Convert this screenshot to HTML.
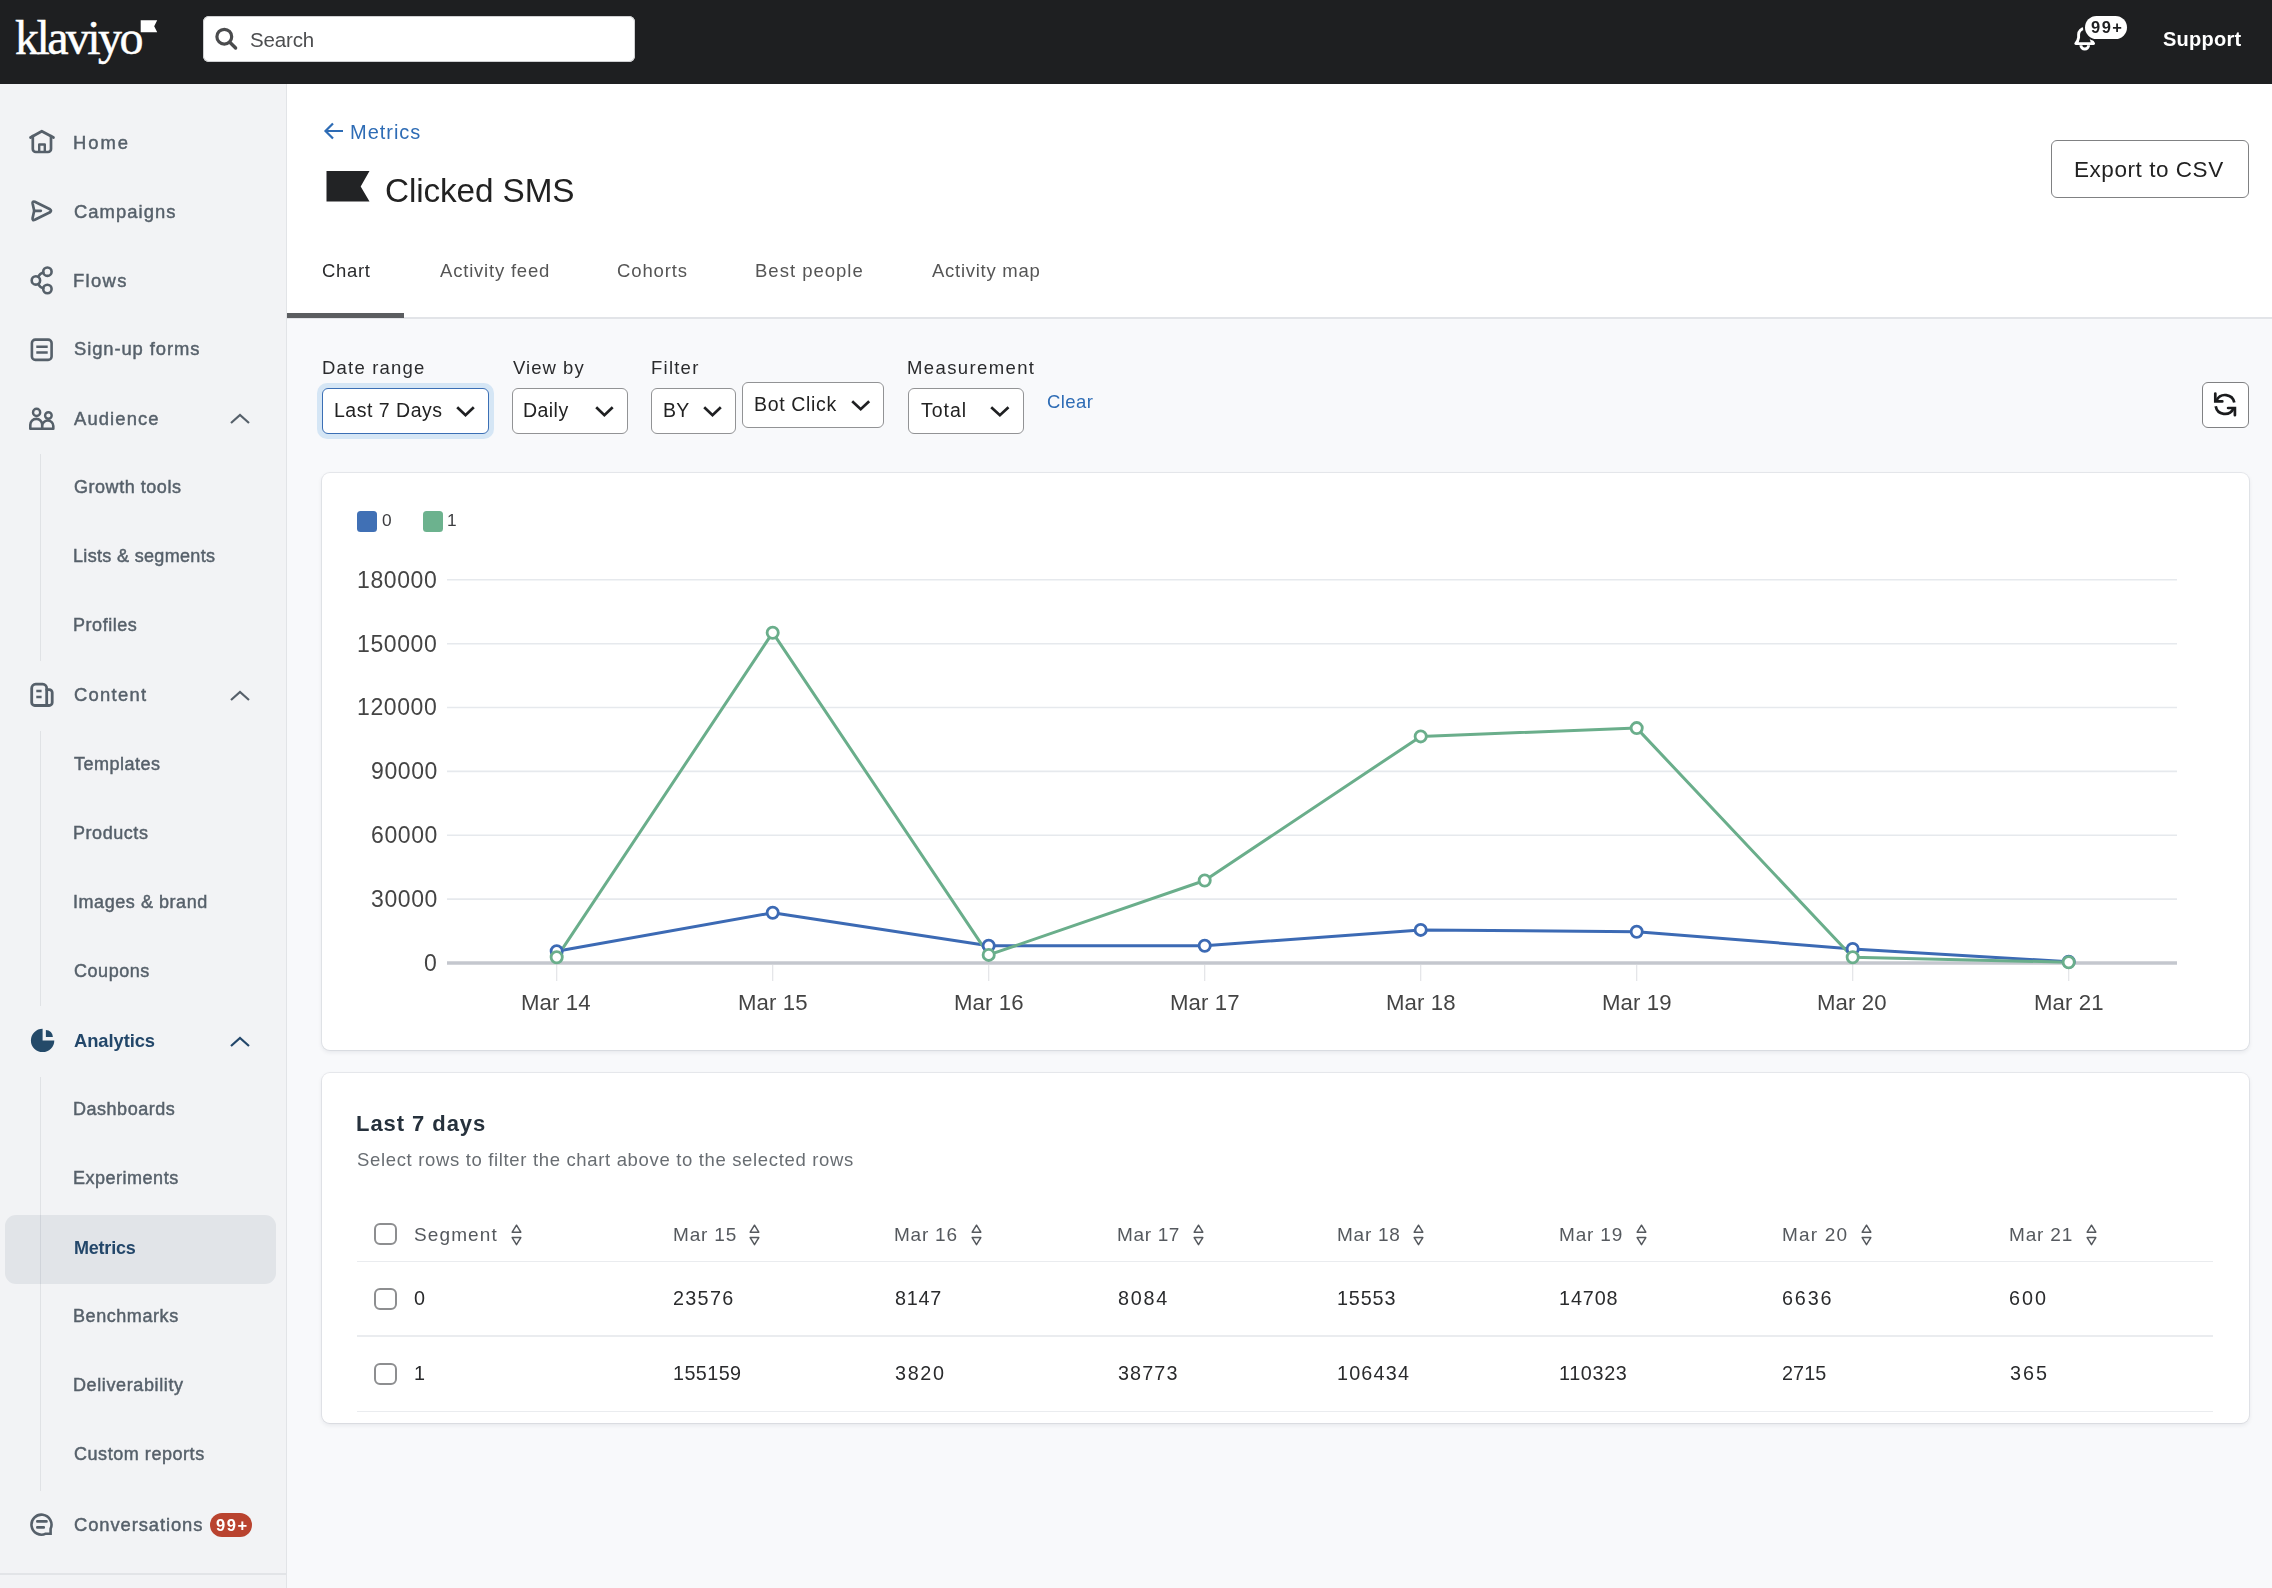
<!DOCTYPE html>
<html><head><meta charset="utf-8"><style>
html,body{margin:0;padding:0;width:2272px;height:1588px;overflow:hidden;background:#f7f8fa;font-family:"Liberation Sans", sans-serif;}
.t{position:absolute;line-height:1;white-space:nowrap;will-change:transform;}
</style></head><body>
<div style="position:absolute;left:0px;top:0px;width:2272px;height:84px;background:#1e1f21"></div>
<div style="position:absolute;left:15px;top:8.4px;font-family:'Liberation Serif',serif;font-size:48px;line-height:60px;color:#fff;letter-spacing:-2.6px;-webkit-text-stroke:0.5px #fff;white-space:nowrap">klaviyo</div>
<svg style="position:absolute;left:140px;top:20px" width="18" height="13" viewBox="0 0 18 13"><path d="M0.7 0.2H17.2L14.2 6.2L17.2 12.2H0.7Z" fill="#fff"/></svg>
<div style="position:absolute;left:203px;top:16px;width:432px;height:46px;background:#fff;border-radius:6px;box-shadow:inset 0 0 0 1px #cfd0d2"></div>
<svg style="position:absolute;left:213px;top:26px" width="26" height="26" viewBox="0 0 26 26"><circle cx="11.3" cy="10.7" r="7.4" fill="none" stroke="#4a4b4d" stroke-width="3.2"/><path d="M16.8 16.2L22.6 22" stroke="#4a4b4d" stroke-width="3.4" stroke-linecap="round"/></svg>
<div class="t " style="left:250.10px;top:29.55px;font-size:20.5px;color:#4d4e50;font-weight:400;letter-spacing:-0.160px;">Search</div>
<svg style="position:absolute;left:2060px;top:10px" width="50" height="50" viewBox="2060 10 50 50" fill="none" stroke="#fff" stroke-width="2.9" stroke-linejoin="round"><path d="M2075.8 43.6H2093.6Q2091.4 41.5 2090.8 37.5V34.5A6.1 6.1 0 0 0 2078.6 34.5V37.5Q2078 41.5 2075.8 43.6Z"/><path d="M2080.9 45.2A3.85 3.85 0 0 0 2088.6 45.2"/></svg>
<div style="position:absolute;left:2085px;top:16px;width:42px;height:23px;background:#fff;border-radius:12px;box-shadow:0 0 0 2px #1e1f21"></div>
<div class="t " style="left:2090.80px;top:19.23px;font-size:16.5px;color:#1e1f21;font-weight:700;letter-spacing:1.450px;">99+</div>
<div class="t " style="left:2163.40px;top:29.27px;font-size:20px;color:#fff;font-weight:700;letter-spacing:0.250px;">Support</div>
<div style="position:absolute;left:0px;top:84px;width:286px;height:1504px;background:#f2f3f5"></div>
<div style="position:absolute;left:286px;top:84px;width:1px;height:1504px;background:#e2e4e7"></div>
<div style="position:absolute;left:0px;top:1573px;width:286px;height:1.5px;background:#e2e4e7"></div>
<div style="position:absolute;left:5px;top:1215px;width:271px;height:69px;background:#e1e4e8;border-radius:11px"></div>
<div style="position:absolute;left:40.3px;top:454px;width:1px;height:207px;background:rgba(30,45,65,0.085)"></div>
<div style="position:absolute;left:40.3px;top:731px;width:1px;height:275px;background:rgba(30,45,65,0.085)"></div>
<div style="position:absolute;left:40.3px;top:1077px;width:1px;height:414px;background:rgba(30,45,65,0.085)"></div>
<div class="t " style="left:72.90px;top:133.72px;font-size:18.4px;color:#56606a;font-weight:400;letter-spacing:1.933px;-webkit-text-stroke:0.45px currentColor;">Home</div>
<div class="t " style="left:73.50px;top:203.42px;font-size:18.4px;color:#56606a;font-weight:400;letter-spacing:1.050px;-webkit-text-stroke:0.45px currentColor;">Campaigns</div>
<div class="t " style="left:72.90px;top:271.72px;font-size:18.4px;color:#56606a;font-weight:400;letter-spacing:1.325px;-webkit-text-stroke:0.45px currentColor;">Flows</div>
<div class="t " style="left:73.60px;top:340.42px;font-size:18.4px;color:#56606a;font-weight:400;letter-spacing:0.908px;-webkit-text-stroke:0.45px currentColor;">Sign-up forms</div>
<div class="t " style="left:74.40px;top:410.12px;font-size:18.4px;color:#56606a;font-weight:400;letter-spacing:1.129px;-webkit-text-stroke:0.45px currentColor;">Audience</div>
<div class="t " style="left:73.50px;top:686.32px;font-size:18.4px;color:#56606a;font-weight:400;letter-spacing:1.267px;-webkit-text-stroke:0.45px currentColor;">Content</div>
<div class="t " style="left:73.50px;top:1516.12px;font-size:18.4px;color:#56606a;font-weight:400;letter-spacing:0.908px;-webkit-text-stroke:0.45px currentColor;">Conversations</div>
<div class="t " style="left:73.80px;top:1032.42px;font-size:18.4px;color:#23476a;font-weight:700;letter-spacing:-0.087px;">Analytics</div>
<div class="t " style="left:73.90px;top:478.06px;font-size:18px;color:#56606a;font-weight:400;letter-spacing:0.536px;-webkit-text-stroke:0.45px currentColor;">Growth tools</div>
<div class="t " style="left:73.30px;top:547.26px;font-size:18px;color:#56606a;font-weight:400;letter-spacing:0.333px;-webkit-text-stroke:0.45px currentColor;">Lists &amp; segments</div>
<div class="t " style="left:73.30px;top:616.26px;font-size:18px;color:#56606a;font-weight:400;letter-spacing:0.543px;-webkit-text-stroke:0.45px currentColor;">Profiles</div>
<div class="t " style="left:74.40px;top:754.56px;font-size:18px;color:#56606a;font-weight:400;letter-spacing:0.500px;-webkit-text-stroke:0.45px currentColor;">Templates</div>
<div class="t " style="left:73.30px;top:823.56px;font-size:18px;color:#56606a;font-weight:400;letter-spacing:0.550px;-webkit-text-stroke:0.45px currentColor;">Products</div>
<div class="t " style="left:73.20px;top:893.26px;font-size:18px;color:#56606a;font-weight:400;letter-spacing:0.550px;-webkit-text-stroke:0.45px currentColor;">Images &amp; brand</div>
<div class="t " style="left:73.90px;top:962.26px;font-size:18px;color:#56606a;font-weight:400;letter-spacing:0.550px;-webkit-text-stroke:0.45px currentColor;">Coupons</div>
<div class="t " style="left:73.30px;top:1100.06px;font-size:18px;color:#56606a;font-weight:400;letter-spacing:0.522px;-webkit-text-stroke:0.45px currentColor;">Dashboards</div>
<div class="t " style="left:73.30px;top:1169.26px;font-size:18px;color:#56606a;font-weight:400;letter-spacing:0.510px;-webkit-text-stroke:0.45px currentColor;">Experiments</div>
<div class="t " style="left:73.30px;top:1307.26px;font-size:18px;color:#56606a;font-weight:400;letter-spacing:0.567px;-webkit-text-stroke:0.45px currentColor;">Benchmarks</div>
<div class="t " style="left:73.30px;top:1376.36px;font-size:18px;color:#56606a;font-weight:400;letter-spacing:0.615px;-webkit-text-stroke:0.45px currentColor;">Deliverability</div>
<div class="t " style="left:73.90px;top:1445.26px;font-size:18px;color:#56606a;font-weight:400;letter-spacing:0.546px;-webkit-text-stroke:0.45px currentColor;">Custom reports</div>
<div class="t " style="left:74.00px;top:1238.56px;font-size:18px;color:#23476a;font-weight:700;letter-spacing:-0.217px;">Metrics</div>
<svg style="position:absolute;left:228px;top:412px" width="24" height="14" viewBox="0 0 24 14"><path d="M3 11L12 3L21 11" fill="none" stroke="#56606a" stroke-width="2.2"/></svg>
<svg style="position:absolute;left:228px;top:689px" width="24" height="14" viewBox="0 0 24 14"><path d="M3 11L12 3L21 11" fill="none" stroke="#56606a" stroke-width="2.2"/></svg>
<svg style="position:absolute;left:228px;top:1035px" width="24" height="14" viewBox="0 0 24 14"><path d="M3 11L12 3L21 11" fill="none" stroke="#23476a" stroke-width="2.2"/></svg>
<div style="position:absolute;left:210px;top:1513px;width:42px;height:24px;background:#b9432f;border-radius:12px"></div>
<div class="t " style="left:215.50px;top:1517.23px;font-size:16.5px;color:#fff;font-weight:700;letter-spacing:1.550px;">99+</div>
<div style="position:absolute;left:287px;top:84px;width:1985px;height:234px;background:#fff"></div>
<div style="position:absolute;left:287px;top:318px;width:1985px;height:1270px;background:#f8f9fb"></div>
<div style="position:absolute;left:287px;top:317px;width:1985px;height:1.5px;background:#e2e4e8"></div>
<div style="position:absolute;left:287px;top:313px;width:117px;height:5px;background:#5b5d60"></div>
<svg style="position:absolute;left:321px;top:118.5px" width="26" height="24" viewBox="0 0 26 24"><path d="M22 12H5M12 4.5L4.5 12L12 19.5" fill="none" stroke="#2e6cb5" stroke-width="2.2"/></svg>
<div class="t " style="left:350.00px;top:121.97px;font-size:20px;color:#2e6cb5;font-weight:400;letter-spacing:0.983px;">Metrics</div>
<svg style="position:absolute;left:326px;top:171px" width="44" height="31" viewBox="0 0 44 31"><path d="M0.5 0H43.5L34.7 15.4L43.5 30.5H0.5Z" fill="#222325"/></svg>
<div class="t " style="left:385.30px;top:174.11px;font-size:33.3px;color:#222;font-weight:400;letter-spacing:-0.110px;">Clicked SMS</div>
<div class="t " style="left:322.00px;top:261.84px;font-size:18.5px;color:#2a2b2d;font-weight:400;letter-spacing:0.650px;">Chart</div>
<div class="t " style="left:439.60px;top:261.84px;font-size:18.5px;color:#555;font-weight:400;letter-spacing:0.800px;">Activity feed</div>
<div class="t " style="left:617.10px;top:261.84px;font-size:18.5px;color:#555;font-weight:400;letter-spacing:0.867px;">Cohorts</div>
<div class="t " style="left:755.10px;top:261.84px;font-size:18.5px;color:#555;font-weight:400;letter-spacing:1.000px;">Best people</div>
<div class="t " style="left:932.00px;top:261.84px;font-size:18.5px;color:#555;font-weight:400;letter-spacing:0.736px;">Activity map</div>
<div style="position:absolute;left:2051px;top:140px;width:198px;height:58px;background:#fff;border:1.5px solid #808183;border-radius:6px;box-sizing:border-box"></div>
<div class="t " style="left:2074.20px;top:159.15px;font-size:22.5px;color:#222;font-weight:400;letter-spacing:0.550px;">Export to CSV</div>
<div class="t " style="left:321.90px;top:359.04px;font-size:18.5px;color:#2a2b2d;font-weight:400;letter-spacing:1.200px;">Date range</div>
<div class="t " style="left:513.20px;top:359.04px;font-size:18.5px;color:#2a2b2d;font-weight:400;letter-spacing:1.033px;">View by</div>
<div class="t " style="left:650.50px;top:359.04px;font-size:18.5px;color:#2a2b2d;font-weight:400;letter-spacing:1.240px;">Filter</div>
<div class="t " style="left:906.80px;top:359.04px;font-size:18.5px;color:#2a2b2d;font-weight:400;letter-spacing:1.390px;">Measurement</div>
<div style="position:absolute;left:317px;top:383px;width:177px;height:56px;background:#d5e6f5;border-radius:10px"></div>
<div style="position:absolute;left:322px;top:388px;width:167px;height:46px;background:#fff;border:1.5px solid #3b6fb5;border-radius:6px;box-sizing:border-box"></div>
<div class="t " style="left:333.80px;top:400.99px;font-size:19.5px;color:#222;font-weight:400;letter-spacing:0.510px;">Last 7 Days</div>
<svg style="position:absolute;left:454px;top:404.0px" width="23" height="16" viewBox="0 0 23 16"><path d="M3.2 3.2L11.5 11.2L19.8 3.2" fill="none" stroke="#1f2022" stroke-width="2.7"/></svg>
<div style="position:absolute;left:512px;top:388px;width:116px;height:46px;background:#fff;border:1.5px solid #929395;border-radius:6px;box-sizing:border-box"></div>
<div class="t " style="left:523.10px;top:400.99px;font-size:19.5px;color:#222;font-weight:400;letter-spacing:0.450px;">Daily</div>
<svg style="position:absolute;left:592.7px;top:404.0px" width="22.899999999999977" height="16" viewBox="0 0 22.899999999999977 16"><path d="M3.2 3.2L11.4 11.2L19.7 3.2" fill="none" stroke="#1f2022" stroke-width="2.7"/></svg>
<div style="position:absolute;left:651px;top:388px;width:85px;height:46px;background:#fff;border:1.5px solid #929395;border-radius:6px;box-sizing:border-box"></div>
<div class="t " style="left:662.80px;top:400.99px;font-size:19.5px;color:#222;font-weight:400;letter-spacing:0.200px;">BY</div>
<svg style="position:absolute;left:700.7px;top:404.0px" width="23.0" height="16" viewBox="0 0 23.0 16"><path d="M3.2 3.2L11.5 11.2L19.8 3.2" fill="none" stroke="#1f2022" stroke-width="2.7"/></svg>
<div style="position:absolute;left:742px;top:382px;width:142px;height:46px;background:#fff;border:1.5px solid #929395;border-radius:6px;box-sizing:border-box"></div>
<div class="t " style="left:753.80px;top:395.49px;font-size:19.5px;color:#222;font-weight:400;letter-spacing:0.650px;">Bot Click</div>
<svg style="position:absolute;left:848.6px;top:398.0px" width="23.399999999999977" height="16" viewBox="0 0 23.399999999999977 16"><path d="M3.2 3.2L11.7 11.2L20.2 3.2" fill="none" stroke="#1f2022" stroke-width="2.7"/></svg>
<div style="position:absolute;left:907.5px;top:388px;width:116px;height:46px;background:#fff;border:1.5px solid #929395;border-radius:6px;box-sizing:border-box"></div>
<div class="t " style="left:920.90px;top:400.99px;font-size:19.5px;color:#222;font-weight:400;letter-spacing:0.975px;">Total</div>
<svg style="position:absolute;left:988px;top:404.0px" width="23.700000000000045" height="16" viewBox="0 0 23.700000000000045 16"><path d="M3.2 3.2L11.9 11.2L20.5 3.2" fill="none" stroke="#1f2022" stroke-width="2.7"/></svg>
<div class="t " style="left:1047.10px;top:393.34px;font-size:18.5px;color:#2e6cb5;font-weight:400;letter-spacing:0.400px;">Clear</div>
<div style="position:absolute;left:2202px;top:382px;width:47px;height:46px;background:#fff;border:1.5px solid #808183;border-radius:6px;box-sizing:border-box"></div>
<svg style="position:absolute;left:2196px;top:376px" width="60" height="58" viewBox="2196 376 60 58" fill="none" stroke="#1a1b1d" stroke-width="2.7"><path d="M2216.6 400.4A9.4 9.4 0 0 1 2234.3 402.6"/><path d="M2215.3 393.6V401.4H2222.3" stroke-linecap="round"/><path d="M2215.7 406.2A9.4 9.4 0 0 0 2233.4 408.6"/><path d="M2228.1 408H2234.9V415.2" stroke-linecap="round"/></svg>
<div style="position:absolute;left:322px;top:473px;width:1927px;height:577px;background:#fff;border-radius:8px;box-shadow:0 0 0 1px rgba(20,30,50,0.07), 0 2px 5px rgba(20,30,50,0.09)"></div>
<div style="position:absolute;left:356.5px;top:511.3px;width:20px;height:20.5px;background:#4070b5;border-radius:3.5px"></div>
<div class="t " style="left:382.40px;top:512.16px;font-size:17.3px;color:#3c3d40;font-weight:400;letter-spacing:0.000px;">0</div>
<div style="position:absolute;left:423.3px;top:511.3px;width:20px;height:20.5px;background:#6cb28e;border-radius:3.5px"></div>
<div class="t " style="left:447.20px;top:512.16px;font-size:17.3px;color:#3c3d40;font-weight:400;letter-spacing:0.000px;">1</div>
<svg style="position:absolute;left:0;top:0" width="2272" height="1588" viewBox="0 0 2272 1588"><line x1="447" y1="579.8" x2="2177" y2="579.8" stroke="#e6e9ed" stroke-width="1.6"/><line x1="447" y1="643.7" x2="2177" y2="643.7" stroke="#e6e9ed" stroke-width="1.6"/><line x1="447" y1="707.5" x2="2177" y2="707.5" stroke="#e6e9ed" stroke-width="1.6"/><line x1="447" y1="771.4" x2="2177" y2="771.4" stroke="#e6e9ed" stroke-width="1.6"/><line x1="447" y1="835.3" x2="2177" y2="835.3" stroke="#e6e9ed" stroke-width="1.6"/><line x1="447" y1="899.1" x2="2177" y2="899.1" stroke="#e6e9ed" stroke-width="1.6"/><line x1="556.7" y1="965" x2="556.7" y2="981" stroke="#e3e4e7" stroke-width="1.2"/><line x1="772.7" y1="965" x2="772.7" y2="981" stroke="#e3e4e7" stroke-width="1.2"/><line x1="988.7" y1="965" x2="988.7" y2="981" stroke="#e3e4e7" stroke-width="1.2"/><line x1="1204.7" y1="965" x2="1204.7" y2="981" stroke="#e3e4e7" stroke-width="1.2"/><line x1="1420.7" y1="965" x2="1420.7" y2="981" stroke="#e3e4e7" stroke-width="1.2"/><line x1="1636.7" y1="965" x2="1636.7" y2="981" stroke="#e3e4e7" stroke-width="1.2"/><line x1="1852.7" y1="965" x2="1852.7" y2="981" stroke="#e3e4e7" stroke-width="1.2"/><line x1="2068.7" y1="965" x2="2068.7" y2="981" stroke="#e3e4e7" stroke-width="1.2"/><line x1="447" y1="963.0" x2="2177" y2="963.0" stroke="#c4c7ce" stroke-width="3.4"/><polyline points="556.7,951.3 772.7,912.8 988.7,945.7 1204.7,945.8 1420.7,929.9 1636.7,931.7 1852.7,948.9 2068.7,961.7" fill="none" stroke="#3c6ab4" stroke-width="3" stroke-linejoin="round"/><polyline points="556.7,957.3 772.7,632.7 988.7,954.9 1204.7,880.5 1420.7,736.4 1636.7,728.1 1852.7,957.2 2068.7,962.2" fill="none" stroke="#6aae8b" stroke-width="3" stroke-linejoin="round"/><circle cx="556.7" cy="951.3" r="5.6" fill="#fff" stroke="#3c6ab4" stroke-width="2.8"/><circle cx="772.7" cy="912.8" r="5.6" fill="#fff" stroke="#3c6ab4" stroke-width="2.8"/><circle cx="988.7" cy="945.7" r="5.6" fill="#fff" stroke="#3c6ab4" stroke-width="2.8"/><circle cx="1204.7" cy="945.8" r="5.6" fill="#fff" stroke="#3c6ab4" stroke-width="2.8"/><circle cx="1420.7" cy="929.9" r="5.6" fill="#fff" stroke="#3c6ab4" stroke-width="2.8"/><circle cx="1636.7" cy="931.7" r="5.6" fill="#fff" stroke="#3c6ab4" stroke-width="2.8"/><circle cx="1852.7" cy="948.9" r="5.6" fill="#fff" stroke="#3c6ab4" stroke-width="2.8"/><circle cx="2068.7" cy="961.7" r="5.6" fill="#fff" stroke="#3c6ab4" stroke-width="2.8"/><circle cx="556.7" cy="957.3" r="5.6" fill="#fff" stroke="#6aae8b" stroke-width="2.8"/><circle cx="772.7" cy="632.7" r="5.6" fill="#fff" stroke="#6aae8b" stroke-width="2.8"/><circle cx="988.7" cy="954.9" r="5.6" fill="#fff" stroke="#6aae8b" stroke-width="2.8"/><circle cx="1204.7" cy="880.5" r="5.6" fill="#fff" stroke="#6aae8b" stroke-width="2.8"/><circle cx="1420.7" cy="736.4" r="5.6" fill="#fff" stroke="#6aae8b" stroke-width="2.8"/><circle cx="1636.7" cy="728.1" r="5.6" fill="#fff" stroke="#6aae8b" stroke-width="2.8"/><circle cx="1852.7" cy="957.2" r="5.6" fill="#fff" stroke="#6aae8b" stroke-width="2.8"/><circle cx="2068.7" cy="962.2" r="5.6" fill="#fff" stroke="#6aae8b" stroke-width="2.8"/></svg>
<div class="t " style="left:357.10px;top:568.63px;font-size:23px;color:#444;font-weight:400;letter-spacing:0.600px;">180000</div>
<div class="t " style="left:357.10px;top:632.50px;font-size:23px;color:#444;font-weight:400;letter-spacing:0.600px;">150000</div>
<div class="t " style="left:357.10px;top:696.36px;font-size:23px;color:#444;font-weight:400;letter-spacing:0.600px;">120000</div>
<div class="t " style="left:370.50px;top:760.23px;font-size:23px;color:#444;font-weight:400;letter-spacing:0.600px;">90000</div>
<div class="t " style="left:370.50px;top:824.10px;font-size:23px;color:#444;font-weight:400;letter-spacing:0.600px;">60000</div>
<div class="t " style="left:370.50px;top:887.96px;font-size:23px;color:#444;font-weight:400;letter-spacing:0.600px;">30000</div>
<div class="t " style="left:424.10px;top:951.83px;font-size:23px;color:#444;font-weight:400;letter-spacing:0.600px;">0</div>
<div class="t " style="left:521.35px;top:992.11px;font-size:22.2px;color:#444;font-weight:400;letter-spacing:0.100px;">Mar 14</div>
<div class="t " style="left:737.50px;top:992.11px;font-size:22.2px;color:#444;font-weight:400;letter-spacing:0.100px;">Mar 15</div>
<div class="t " style="left:953.50px;top:992.11px;font-size:22.2px;color:#444;font-weight:400;letter-spacing:0.100px;">Mar 16</div>
<div class="t " style="left:1169.55px;top:992.11px;font-size:22.2px;color:#444;font-weight:400;letter-spacing:0.100px;">Mar 17</div>
<div class="t " style="left:1385.50px;top:992.11px;font-size:22.2px;color:#444;font-weight:400;letter-spacing:0.100px;">Mar 18</div>
<div class="t " style="left:1601.55px;top:992.11px;font-size:22.2px;color:#444;font-weight:400;letter-spacing:0.100px;">Mar 19</div>
<div class="t " style="left:1817.45px;top:992.11px;font-size:22.2px;color:#444;font-weight:400;letter-spacing:0.100px;">Mar 20</div>
<div class="t " style="left:2033.55px;top:992.11px;font-size:22.2px;color:#444;font-weight:400;letter-spacing:0.100px;">Mar 21</div>
<div style="position:absolute;left:322px;top:1073px;width:1927px;height:350px;background:#fff;border-radius:8px;box-shadow:0 0 0 1px rgba(20,30,50,0.07), 0 2px 5px rgba(20,30,50,0.09)"></div>
<div class="t " style="left:356.20px;top:1112.98px;font-size:22px;color:#26313c;font-weight:700;letter-spacing:0.940px;">Last 7 days</div>
<div class="t " style="left:356.80px;top:1151.14px;font-size:18.5px;color:#686d72;font-weight:400;letter-spacing:0.660px;">Select rows to filter the chart above to the selected rows</div>
<div style="position:absolute;left:357px;top:1260.6px;width:1856px;height:1.4px;background:#eaecef"></div>
<div style="position:absolute;left:357px;top:1335.4px;width:1856px;height:1.4px;background:#eaecef"></div>
<div style="position:absolute;left:357px;top:1411px;width:1856px;height:1.4px;background:#eaecef"></div>
<div style="position:absolute;left:373.9px;top:1222.6px;width:22.7px;height:22.5px;border:2.5px solid #8d8e90;border-radius:6px;box-sizing:border-box;background:#fff"></div>
<div style="position:absolute;left:373.9px;top:1287.8px;width:22.7px;height:22.5px;border:2.5px solid #8d8e90;border-radius:6px;box-sizing:border-box;background:#fff"></div>
<div style="position:absolute;left:373.9px;top:1362.6px;width:22.7px;height:22.5px;border:2.5px solid #8d8e90;border-radius:6px;box-sizing:border-box;background:#fff"></div>
<div class="t " style="left:414.10px;top:1225.32px;font-size:19px;color:#55595e;font-weight:400;letter-spacing:1.117px;">Segment</div>
<svg style="position:absolute;left:509.1px;top:1223.8px" width="15" height="22" viewBox="0 0 15 22" fill="none" stroke="#55595e" stroke-width="1.5" stroke-linejoin="round"><path d="M7.5 1.2L11.8 8.2H3.2Z"/><path d="M7.5 20.6L11.8 13.6H3.2Z"/></svg>
<div class="t " style="left:672.50px;top:1225.32px;font-size:19px;color:#55595e;font-weight:400;letter-spacing:0.820px;">Mar 15</div>
<svg style="position:absolute;left:747.3px;top:1223.8px" width="15" height="22" viewBox="0 0 15 22" fill="none" stroke="#55595e" stroke-width="1.5" stroke-linejoin="round"><path d="M7.5 1.2L11.8 8.2H3.2Z"/><path d="M7.5 20.6L11.8 13.6H3.2Z"/></svg>
<div class="t " style="left:894.30px;top:1225.32px;font-size:19px;color:#55595e;font-weight:400;letter-spacing:0.780px;">Mar 16</div>
<svg style="position:absolute;left:968.8999999999999px;top:1223.8px" width="15" height="22" viewBox="0 0 15 22" fill="none" stroke="#55595e" stroke-width="1.5" stroke-linejoin="round"><path d="M7.5 1.2L11.8 8.2H3.2Z"/><path d="M7.5 20.6L11.8 13.6H3.2Z"/></svg>
<div class="t " style="left:1116.90px;top:1225.32px;font-size:19px;color:#55595e;font-weight:400;letter-spacing:0.660px;">Mar 17</div>
<svg style="position:absolute;left:1190.7px;top:1223.8px" width="15" height="22" viewBox="0 0 15 22" fill="none" stroke="#55595e" stroke-width="1.5" stroke-linejoin="round"><path d="M7.5 1.2L11.8 8.2H3.2Z"/><path d="M7.5 20.6L11.8 13.6H3.2Z"/></svg>
<div class="t " style="left:1336.50px;top:1225.32px;font-size:19px;color:#55595e;font-weight:400;letter-spacing:0.760px;">Mar 18</div>
<svg style="position:absolute;left:1411.0px;top:1223.8px" width="15" height="22" viewBox="0 0 15 22" fill="none" stroke="#55595e" stroke-width="1.5" stroke-linejoin="round"><path d="M7.5 1.2L11.8 8.2H3.2Z"/><path d="M7.5 20.6L11.8 13.6H3.2Z"/></svg>
<div class="t " style="left:1559.10px;top:1225.32px;font-size:19px;color:#55595e;font-weight:400;letter-spacing:0.840px;">Mar 19</div>
<svg style="position:absolute;left:1633.8999999999999px;top:1223.8px" width="15" height="22" viewBox="0 0 15 22" fill="none" stroke="#55595e" stroke-width="1.5" stroke-linejoin="round"><path d="M7.5 1.2L11.8 8.2H3.2Z"/><path d="M7.5 20.6L11.8 13.6H3.2Z"/></svg>
<div class="t " style="left:1781.90px;top:1225.32px;font-size:19px;color:#55595e;font-weight:400;letter-spacing:1.200px;">Mar 20</div>
<svg style="position:absolute;left:1858.7px;top:1223.8px" width="15" height="22" viewBox="0 0 15 22" fill="none" stroke="#55595e" stroke-width="1.5" stroke-linejoin="round"><path d="M7.5 1.2L11.8 8.2H3.2Z"/><path d="M7.5 20.6L11.8 13.6H3.2Z"/></svg>
<div class="t " style="left:2008.90px;top:1225.32px;font-size:19px;color:#55595e;font-weight:400;letter-spacing:0.840px;">Mar 21</div>
<svg style="position:absolute;left:2083.7000000000003px;top:1223.8px" width="15" height="22" viewBox="0 0 15 22" fill="none" stroke="#55595e" stroke-width="1.5" stroke-linejoin="round"><path d="M7.5 1.2L11.8 8.2H3.2Z"/><path d="M7.5 20.6L11.8 13.6H3.2Z"/></svg>
<div class="t " style="left:414.30px;top:1289.24px;font-size:19.8px;color:#2a2b2d;font-weight:400;letter-spacing:0.700px;">0</div>
<div class="t " style="left:673.00px;top:1289.24px;font-size:19.8px;color:#2a2b2d;font-weight:400;letter-spacing:1.300px;">23576</div>
<div class="t " style="left:895.00px;top:1289.24px;font-size:19.8px;color:#2a2b2d;font-weight:400;letter-spacing:0.733px;">8147</div>
<div class="t " style="left:1117.60px;top:1289.24px;font-size:19.8px;color:#2a2b2d;font-weight:400;letter-spacing:1.767px;">8084</div>
<div class="t " style="left:1336.50px;top:1289.24px;font-size:19.8px;color:#2a2b2d;font-weight:400;letter-spacing:0.850px;">15553</div>
<div class="t " style="left:1559.10px;top:1289.24px;font-size:19.8px;color:#2a2b2d;font-weight:400;letter-spacing:0.900px;">14708</div>
<div class="t " style="left:1782.40px;top:1289.24px;font-size:19.8px;color:#2a2b2d;font-weight:400;letter-spacing:1.833px;">6636</div>
<div class="t " style="left:2009.40px;top:1289.24px;font-size:19.8px;color:#2a2b2d;font-weight:400;letter-spacing:2.050px;">600</div>
<div class="t " style="left:413.50px;top:1364.24px;font-size:19.8px;color:#2a2b2d;font-weight:400;letter-spacing:0.700px;">1</div>
<div class="t " style="left:672.50px;top:1364.24px;font-size:19.8px;color:#2a2b2d;font-weight:400;letter-spacing:0.420px;">155159</div>
<div class="t " style="left:895.10px;top:1364.24px;font-size:19.8px;color:#2a2b2d;font-weight:400;letter-spacing:1.633px;">3820</div>
<div class="t " style="left:1117.70px;top:1364.24px;font-size:19.8px;color:#2a2b2d;font-weight:400;letter-spacing:1.100px;">38773</div>
<div class="t " style="left:1336.50px;top:1364.24px;font-size:19.8px;color:#2a2b2d;font-weight:400;letter-spacing:1.180px;">106434</div>
<div class="t " style="left:1559.10px;top:1364.24px;font-size:19.8px;color:#2a2b2d;font-weight:400;letter-spacing:0.660px;">110323</div>
<div class="t " style="left:1782.40px;top:1364.24px;font-size:19.8px;color:#2a2b2d;font-weight:400;letter-spacing:0.100px;">2715</div>
<div class="t " style="left:2009.70px;top:1364.24px;font-size:19.8px;color:#2a2b2d;font-weight:400;letter-spacing:1.950px;">365</div>
<svg style="position:absolute;left:0;top:0" width="286" height="1588" viewBox="0 0 286 1588" fill="none" stroke="#56606a" stroke-width="2.7" stroke-linecap="round" stroke-linejoin="round">
<path d="M30.5 137.5L41.8 131.2L53.5 137.5"/>
<path d="M32.8 136V149a3 3 0 0 0 3 3H48a3 3 0 0 0 3-3V136"/>
<path d="M39.2 152V144.5H44.8V152" stroke-linecap="butt" stroke-width="2.4"/>
<path d="M34.2 210.8L32.6 203.5Q32.2 200.8 34.8 201.8L50 209.3Q52 210.8 50 212.3L34.8 219.8Q32.2 220.8 32.6 218Z"/>
<path d="M34.2 210.8H40.8"/>
<circle cx="47.4" cy="271.7" r="4.2" stroke-width="2.6"/><circle cx="35.9" cy="280.4" r="4.2" stroke-width="2.6"/><circle cx="47.4" cy="289" r="4.2" stroke-width="2.6"/>
<path d="M38.3 276.8Q39.8 273.4 43.3 272.6M38.3 284Q39.8 287.4 43.3 288.2" stroke-width="2.6"/>
<rect x="31.9" y="339.6" width="19.7" height="20.3" rx="3.5" stroke-width="2.6"/>
<path d="M36.3 346.8H47.7M36.3 352.5H47.7" stroke-width="2.4" stroke-linecap="butt"/>
<circle cx="36.6" cy="412.4" r="3.6" stroke-width="2.4"/><circle cx="48.4" cy="415.5" r="3.3" stroke-width="2.4"/>
<path d="M30.3 428.7V424.8A5.95 5.95 0 0 1 42.2 424.8V428.7ZM42.2 428.7V426A5.55 5.55 0 0 1 53.3 426V428.7Z" stroke-width="2.6"/>
<path d="M46.7 705.5H34.7a3 3 0 0 1-3-3V688.2a4 4 0 0 1 4-4H42.7a4 4 0 0 1 4 4V705.5" stroke-width="2.8"/>
<path d="M46.7 689.6H49.2a3 3 0 0 1 3 3V702.5a3 3 0 0 1-3 3H46.7" stroke-width="2.8"/>
<path d="M36.3 691H41.6M36.3 696.9H41.6" stroke-width="2.5" stroke-linecap="butt"/>
<path d="M42.6 1028.7V1040.4H54.3A11.7 11.7 0 1 1 42.6 1028.7Z" fill="#244a69" stroke="none"/>
<path d="M45.9 1037V1030A7 7 0 0 1 52.9 1037Z" fill="#244a69" stroke="none"/>
<path d="M50.6 1528.8A10 10 0 1 0 45.8 1533.7H50.6Z" stroke-width="2.6" stroke-linejoin="miter"/>
<path d="M37.3 1521.4H46.5M37.3 1527.4H43.8" stroke-width="2.6"/>
</svg>
</body></html>
